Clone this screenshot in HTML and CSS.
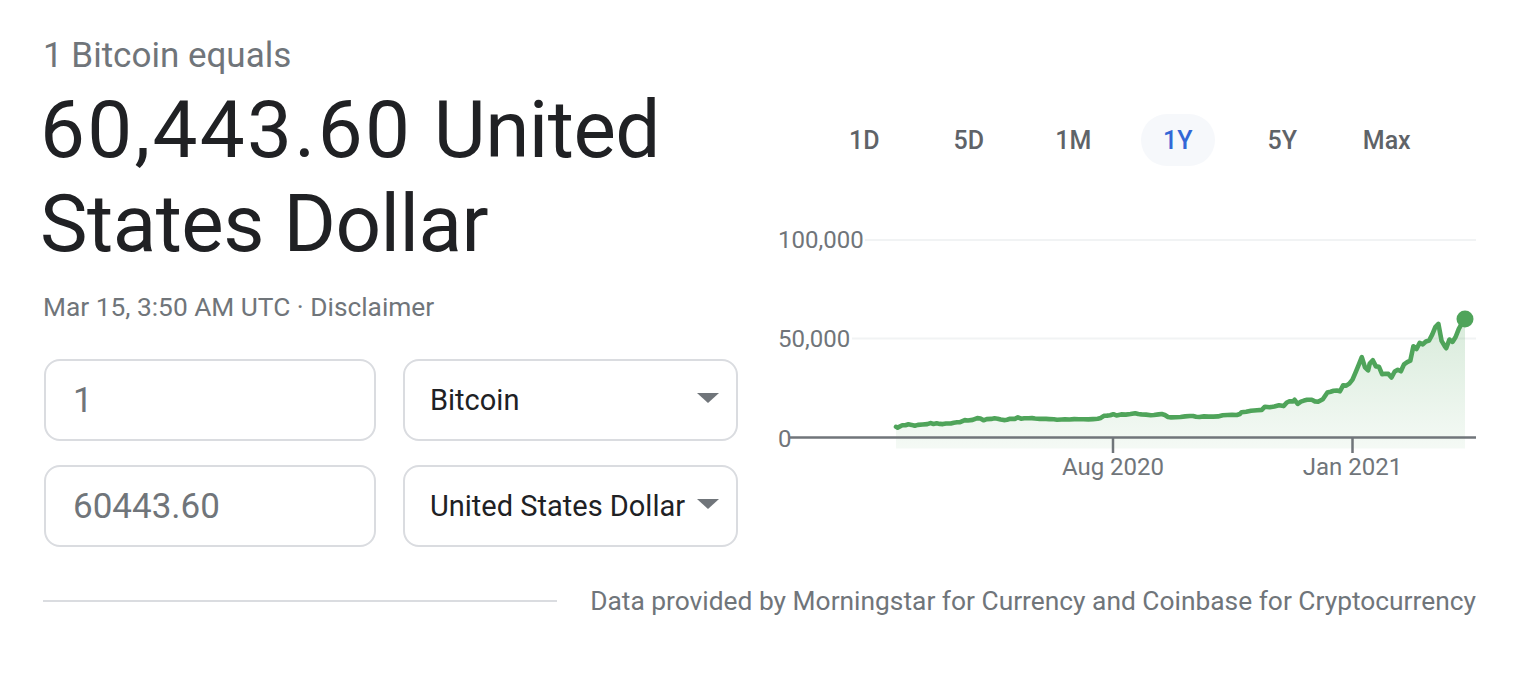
FILE: index.html
```html
<!DOCTYPE html>
<html lang="en">
<head>
<meta charset="utf-8">
<title>1 Bitcoin equals</title>
<link rel="stylesheet" href="styles.css">
</head>
<body>
<div class="page">
  <div class="main">
    <div class="left">
      <div class="equals">1 Bitcoin equals</div>
      <div class="result"><span class="num">60,443.60</span><span class="word">United</span><span class="word">States Dollar</span></div>
      <div class="meta">Mar 15, 3:50 AM UTC · Disclaimer</div>
      <div class="converter">
        <div class="field amount">1</div>
        <div class="field select"><span>Bitcoin</span><span class="arrow"></span></div>
        <div class="field amount">60443.60</div>
        <div class="field select"><span>United States Dollar</span><span class="arrow"></span></div>
      </div>
    </div>
    <div class="right">
      <div class="tabs">
        <div class="tab">1D</div>
        <div class="tab">5D</div>
        <div class="tab">1M</div>
        <div class="tab active">1Y</div>
        <div class="tab">5Y</div>
        <div class="tab">Max</div>
      </div>
      <svg class="chart" width="698" height="270" viewBox="0 0 698 270" xmlns="http://www.w3.org/2000/svg">
        <defs>
          <linearGradient id="fillg" x1="0" y1="0" x2="0" y2="1">
            <stop offset="0" stop-color="#4fa45a" stop-opacity="0.22"/>
            <stop offset="1" stop-color="#4fa45a" stop-opacity="0.06"/>
          </linearGradient>
        </defs>
        <line class="grid" x1="87" y1="20" x2="698" y2="20"/>
        <line class="grid" x1="74" y1="118.5" x2="698" y2="118.5"/>
        <text class="ylab" x="0" y="28">100,000</text>
        <text class="ylab" x="0" y="126.5">50,000</text>
        <text class="ylab" x="0" y="226.5">0</text>
        <path class="area" d="M118.0,206.8 L119.6,207.6 124.3,205.3 127.4,205.3 130.5,204.3 133.6,204.9 136.8,205.8 139.9,204.9 144.6,204.5 149.3,204.1 152.4,203.1 155.5,203.9 158.6,203.3 161.8,203.9 164.9,204.1 168.0,203.5 172.7,203.5 175.8,202.7 179.0,202.3 182.1,202.1 186.8,200.1 189.9,200.5 194.6,199.9 199.3,198.1 202.4,198.5 205.5,200.3 208.7,199.1 213.4,198.9 216.5,198.3 219.6,198.7 222.7,199.5 225.9,200.1 229.0,199.7 232.1,198.7 236.8,198.9 239.9,197.4 243.1,198.7 246.2,198.3 250.9,198.3 254.0,198.1 257.1,198.5 261.8,198.9 264.9,198.7 268.1,198.9 271.2,199.1 275.9,199.3 279.0,199.7 283.7,199.5 286.8,199.3 291.5,199.5 296.2,199.1 300.9,199.3 305.6,199.3 310.3,199.4 315.0,199.1 319.7,198.7 322.8,197.9 325.9,195.8 329.0,195.6 332.2,195.2 335.3,194.2 338.4,195.4 343.1,194.4 347.8,194.6 352.5,194.0 357.2,193.2 360.3,194.0 363.4,194.4 368.1,194.6 372.8,195.2 375.9,195.0 380.6,194.4 383.7,194.0 386.9,195.0 390.0,197.0 393.1,197.4 397.8,197.2 402.5,197.0 407.2,196.4 411.9,196.0 415.0,196.0 418.1,196.8 421.3,197.0 426.0,196.4 430.6,196.6 435.3,196.6 440.0,196.4 444.7,195.2 449.4,195.0 454.1,194.8 458.8,195.0 461.9,194.0 463.5,192.2 468.2,191.8 472.9,190.8 479.1,190.2 483.8,189.9 486.9,186.7 491.6,187.3 496.3,186.5 501.0,185.3 505.7,186.1 508.8,182.5 511.9,181.2 515.1,181.4 516.6,179.8 519.7,183.9 522.9,181.6 526.0,180.6 529.1,179.8 533.8,179.8 536.9,181.4 540.1,181.8 544.8,179.2 549.4,172.5 552.6,171.7 555.7,170.7 558.8,170.5 562.0,171.3 565.1,165.4 568.2,165.6 571.3,163.6 574.5,159.6 577.6,152.3 580.7,144.8 583.8,137.1 587.0,147.4 590.1,150.4 591.7,143.6 594.8,140.3 597.9,146.4 601.0,146.8 604.2,154.3 607.3,153.7 610.4,153.9 613.5,157.5 616.7,151.5 619.8,149.8 622.9,151.3 626.0,144.4 629.2,142.1 632.3,140.7 635.4,126.3 638.5,129.0 641.7,122.9 644.8,124.3 647.9,121.5 651.1,120.5 654.2,114.6 657.3,107.1 660.4,103.9 663.6,120.9 666.7,126.1 668.2,128.2 671.4,119.5 674.5,121.9 677.6,117.0 680.8,108.9 683.9,103.3 687.0,98.2 L687,228.5 L118,228.5 Z"/>
        <line class="axis" x1="12" y1="217.5" x2="698" y2="217.5"/>
        <line class="tick" x1="335" y1="217.5" x2="335" y2="233"/>
        <line class="tick" x1="574.5" y1="217.5" x2="574.5" y2="233"/>
        <path class="line" d="M118.0,206.8 L119.6,207.6 124.3,205.3 127.4,205.3 130.5,204.3 133.6,204.9 136.8,205.8 139.9,204.9 144.6,204.5 149.3,204.1 152.4,203.1 155.5,203.9 158.6,203.3 161.8,203.9 164.9,204.1 168.0,203.5 172.7,203.5 175.8,202.7 179.0,202.3 182.1,202.1 186.8,200.1 189.9,200.5 194.6,199.9 199.3,198.1 202.4,198.5 205.5,200.3 208.7,199.1 213.4,198.9 216.5,198.3 219.6,198.7 222.7,199.5 225.9,200.1 229.0,199.7 232.1,198.7 236.8,198.9 239.9,197.4 243.1,198.7 246.2,198.3 250.9,198.3 254.0,198.1 257.1,198.5 261.8,198.9 264.9,198.7 268.1,198.9 271.2,199.1 275.9,199.3 279.0,199.7 283.7,199.5 286.8,199.3 291.5,199.5 296.2,199.1 300.9,199.3 305.6,199.3 310.3,199.4 315.0,199.1 319.7,198.7 322.8,197.9 325.9,195.8 329.0,195.6 332.2,195.2 335.3,194.2 338.4,195.4 343.1,194.4 347.8,194.6 352.5,194.0 357.2,193.2 360.3,194.0 363.4,194.4 368.1,194.6 372.8,195.2 375.9,195.0 380.6,194.4 383.7,194.0 386.9,195.0 390.0,197.0 393.1,197.4 397.8,197.2 402.5,197.0 407.2,196.4 411.9,196.0 415.0,196.0 418.1,196.8 421.3,197.0 426.0,196.4 430.6,196.6 435.3,196.6 440.0,196.4 444.7,195.2 449.4,195.0 454.1,194.8 458.8,195.0 461.9,194.0 463.5,192.2 468.2,191.8 472.9,190.8 479.1,190.2 483.8,189.9 486.9,186.7 491.6,187.3 496.3,186.5 501.0,185.3 505.7,186.1 508.8,182.5 511.9,181.2 515.1,181.4 516.6,179.8 519.7,183.9 522.9,181.6 526.0,180.6 529.1,179.8 533.8,179.8 536.9,181.4 540.1,181.8 544.8,179.2 549.4,172.5 552.6,171.7 555.7,170.7 558.8,170.5 562.0,171.3 565.1,165.4 568.2,165.6 571.3,163.6 574.5,159.6 577.6,152.3 580.7,144.8 583.8,137.1 587.0,147.4 590.1,150.4 591.7,143.6 594.8,140.3 597.9,146.4 601.0,146.8 604.2,154.3 607.3,153.7 610.4,153.9 613.5,157.5 616.7,151.5 619.8,149.8 622.9,151.3 626.0,144.4 629.2,142.1 632.3,140.7 635.4,126.3 638.5,129.0 641.7,122.9 644.8,124.3 647.9,121.5 651.1,120.5 654.2,114.6 657.3,107.1 660.4,103.9 663.6,120.9 666.7,126.1 668.2,128.2 671.4,119.5 674.5,121.9 677.6,117.0 680.8,108.9 683.9,103.3 687.0,98.2"/>
        <circle class="dot" cx="687" cy="99" r="8.5"/>
        <text class="xlab" x="335" y="255">Aug 2020</text>
        <text class="xlab" x="574.5" y="255">Jan 2021</text>
      </svg>
    </div>
  </div>
  <div class="footer">
    <div class="rule"></div>
    <div class="source">Data provided by Morningstar for Currency and Coinbase for Cryptocurrency</div>
  </div>
</div>
</body>
</html>
```

FILE: styles.css
```css
html, body {
  margin: 0;
  padding: 0;
  background: #ffffff;
}

body {
  font-family: Roboto, "Liberation Sans", Arial, sans-serif;
  color: #202124;
}

.page {
  padding: 34px 50px 0 43px;
}

.main {
  display: flex;
  gap: 40px;
}

.left {
  width: 695px;
  flex: none;
}

.equals {
  font-size: 35px;
  line-height: 44px;
  color: #70757a;
}

.result {
  margin-top: 6px;
  margin-left: -3px;
  display: flex;
  flex-wrap: wrap;
  column-gap: 21.5px;
  font-size: 80px;
  line-height: 93.5px;
  letter-spacing: -0.5px;
  color: #202124;
}

.result .num {
  letter-spacing: 2.3px;
}

.result .word {
  white-space: nowrap;
}

.meta {
  margin-top: 18px;
  font-size: 26.3px;
  line-height: 36px;
  color: #70757a;
}

.converter {
  margin-top: 34px;
  margin-left: 1px;
  display: grid;
  grid-template-columns: 332px 335px;
  column-gap: 27px;
  row-gap: 24px;
}

.field {
  box-sizing: border-box;
  height: 82px;
  border: 2px solid #dadce0;
  border-radius: 16px;
  display: flex;
  align-items: center;
}

.amount {
  padding-left: 27px;
  font-size: 35px;
  color: #70757a;
}

.select {
  justify-content: space-between;
  padding-left: 25px;
  padding-right: 17px;
  font-size: 29px;
  color: #202124;
}

.arrow {
  width: 0;
  height: 0;
  border-left: 11.5px solid transparent;
  border-right: 11.5px solid transparent;
  border-top: 10px solid #70757a;
  margin-top: -4px;
}

.right {
  width: 698px;
  flex: none;
}

.tabs {
  margin-top: 80px;
  display: flex;
  justify-content: center;
  gap: 30.5px;
  margin-left: -3px;
}

.tab {
  width: 74px;
  height: 52px;
  border-radius: 26px;
  display: flex;
  align-items: center;
  justify-content: center;
  font-size: 25px;
  font-weight: 500;
  color: #5f6368;
}

.tab.active {
  background: #f6f8fb;
  color: #3367d6;
}

.chart {
  display: block;
  margin-top: 54px;
  overflow: visible;
}

.grid {
  stroke: #f1f3f4;
  stroke-width: 2;
}

.axis {
  stroke: #70757a;
  stroke-width: 2.5;
}

.tick {
  stroke: #70757a;
  stroke-width: 2.5;
}

.ylab {
  font-family: Roboto, "Liberation Sans", Arial, sans-serif;
  font-size: 24px;
  fill: #70757a;
}

.xlab {
  font-family: Roboto, "Liberation Sans", Arial, sans-serif;
  font-size: 24px;
  fill: #70757a;
  text-anchor: middle;
}

.area {
  fill: url(#fillg);
  stroke: none;
}

.line {
  fill: none;
  stroke: #4fa45a;
  stroke-width: 4.6;
  stroke-linejoin: round;
  stroke-linecap: round;
}

.dot {
  fill: #4fa45a;
}

.footer {
  margin-top: 36px;
  width: 1433px;
  height: 36px;
  display: flex;
  align-items: center;
  gap: 33px;
}

.rule {
  flex: 1;
  height: 2px;
  background: #dadce0;
}

.source {
  flex: none;
  font-size: 26.35px;
  color: #70757a;
}
```
